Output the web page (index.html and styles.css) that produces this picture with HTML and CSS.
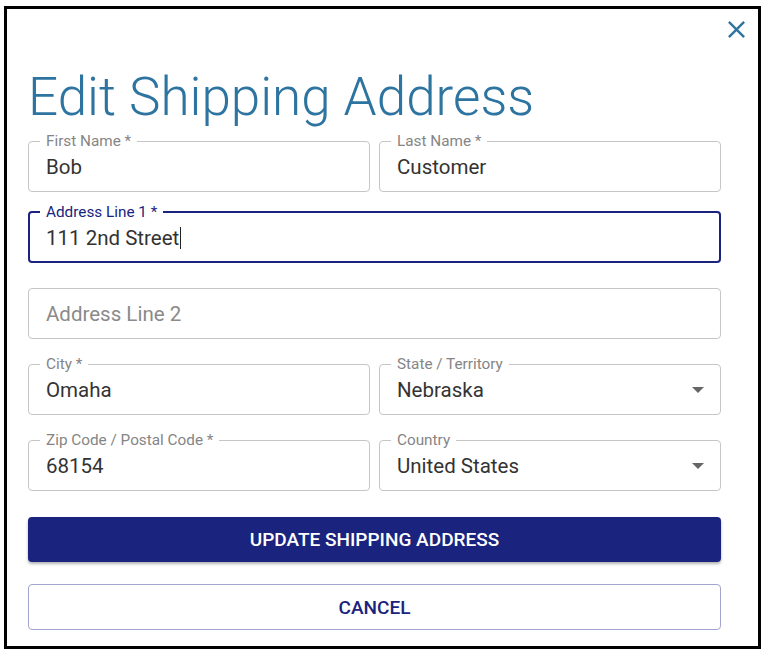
FILE: index.html
```html
<!DOCTYPE html>
<html lang="en">
<head>
    <meta charset="UTF-8">
    <meta name="viewport" content="width=device-width, initial-scale=1.0">
    <title>Edit Shipping Address</title>
    <link rel="stylesheet" href="styles.css">
</head>
<body>

    <div class="dialog">
        <button class="close" type="button" aria-label="Close">
            <svg viewBox="0 0 24 24" width="29" height="29">
                <path d="M19 6.41 17.59 5 12 10.59 6.41 5 5 6.41 10.59 12 5 17.59 6.41 19 12 13.41 17.59 19 19 17.59 13.41 12z"/>
            </svg>
        </button>

        <h1>Edit Shipping Address</h1>

        <form class="form">
            <div class="row two names">
                <fieldset class="field">
                    <legend>First Name *</legend>
                    <div class="value">Bob</div>
                </fieldset>
                <fieldset class="field">
                    <legend>Last Name *</legend>
                    <div class="value">Customer</div>
                </fieldset>
            </div>

            <div class="row">
                <fieldset class="field focused">
                    <legend>Address Line 1 *</legend>
                    <div class="value">111 2nd Street<span class="caret"></span></div>
                </fieldset>
            </div>

            <div class="row">
                <fieldset class="field">
                    <legend class="empty"></legend>
                    <div class="value placeholder">Address Line 2</div>
                </fieldset>
            </div>

            <div class="row two">
                <fieldset class="field">
                    <legend>City *</legend>
                    <div class="value">Omaha</div>
                </fieldset>
                <fieldset class="field select">
                    <legend>State / Territory</legend>
                    <div class="value">Nebraska <span class="arrow"></span></div>
                </fieldset>
            </div>

            <div class="row two">
                <fieldset class="field">
                    <legend>Zip Code / Postal Code *</legend>
                    <div class="value">68154</div>
                </fieldset>
                <fieldset class="field select">
                    <legend>Country</legend>
                    <div class="value">United States <span class="arrow"></span></div>
                </fieldset>
            </div>

            <button type="button" class="btn primary">Update Shipping Address</button>
            <button type="button" class="btn outline">Cancel</button>
        </form>
    </div>

</body>
</html>
```

FILE: styles.css
```css
* {
    box-sizing: border-box;
}
html, body {
    height: 100%;
}
body {
    margin: 0;
    padding: 6px 7px 7px 4px;
    font-family: Roboto, "Liberation Sans", sans-serif;
    background: #fff;
}
.dialog {
    position: relative;
    height: 100%;
    border: 3px solid #000;
    padding: 0 37px 0 21px;
}
.close {
    position: absolute;
    top: 6px;
    right: 7px;
    padding: 0;
    border: none;
    background: none;
    line-height: 0;
}
.close svg {
    fill: #2e74a0;
}
h1 {
    margin: 58px 0 0 0;
    font-size: 53px;
    font-weight: 300;
    line-height: 60px;
    color: #2e74a0;
}
.form {
    display: flex;
    flex-direction: column;
    margin-top: 6px;
}
.row {
    display: grid;
    grid-template-columns: 1fr;
    margin-bottom: 17px;
}
.row.two {
    grid-template-columns: 1fr 1fr;
    column-gap: 9px;
}
.row.names {
    margin-bottom: 12px;
}
.field {
    margin: 0;
    padding: 0 17px;
    border: 1px solid #c6c6c6;
    border-radius: 4px;
    min-width: 0;
}
.field legend {
    margin-left: -6px;
    padding: 0 6px;
    font-size: 15.3px;
    line-height: 16px;
    height: 16px;
    color: #858585;
}
.field legend.empty {
    padding: 0;
}
.value {
    height: 42px;
    padding-top: 6px;
    font-size: 20.5px;
    line-height: 24px;
    color: #333;
    white-space: nowrap;
}
.placeholder {
    color: #8a8a8a;
}
.focused {
    border: 2px solid #1a237e;
    padding: 0 16px;
}
.focused legend {
    color: #1a237e;
}
.focused .value {
    height: 41px;
}
.caret {
    display: inline-block;
    width: 1px;
    height: 22px;
    margin-left: 1px;
    vertical-align: -4px;
    background: #222;
}
.select .value {
    display: flex;
    justify-content: space-between;
    align-items: center;
    padding-top: 0;
    padding-bottom: 6px;
}
.arrow {
    width: 0;
    height: 0;
    margin-right: -1px;
    border-left: 6px solid transparent;
    border-right: 6px solid transparent;
    border-top: 6px solid #666;
}
.btn {
    width: 100%;
    font-family: Roboto, "Liberation Sans", sans-serif;
    font-size: 19px;
    font-weight: 500;
    text-transform: uppercase;
    border-radius: 4px;
    cursor: pointer;
}
.primary {
    height: 45px;
    margin-top: 9px;
    border: none;
    color: #fff;
    background-color: #1a237e;
    box-shadow: 0 2px 3px rgba(0, 0, 0, 0.3);
}
.outline {
    height: 46px;
    margin-top: 22px;
    border: 1px solid #a3a4cf;
    color: #1a237e;
    background: #fff;
}
```
